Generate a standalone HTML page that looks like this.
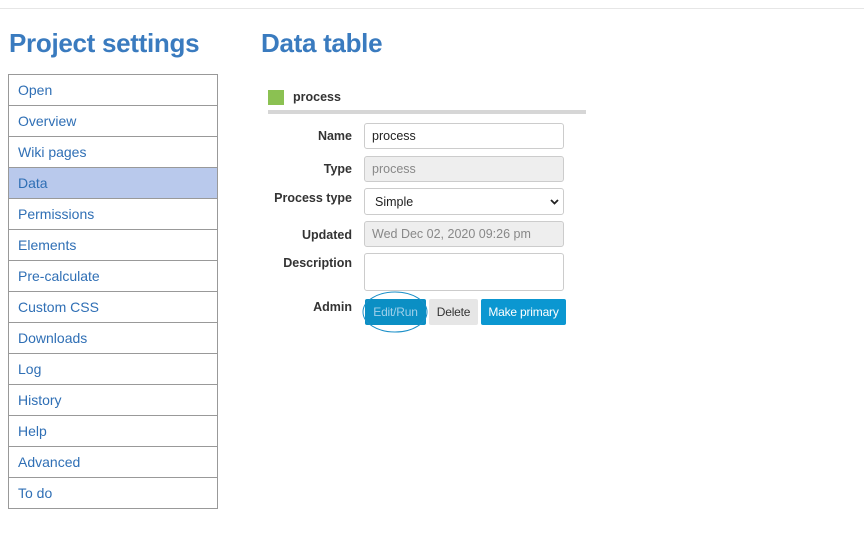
<!DOCTYPE html>
<html><head><meta charset="utf-8"><style>
*{box-sizing:border-box}
body{margin:0;width:864px;height:540px;background:#fff;font-family:"Liberation Sans",Arial,sans-serif;position:relative;overflow:hidden}
.top{position:absolute;left:0;top:0;width:864px;height:9px;border-bottom:1px solid #e6e6e6}
h1{position:absolute;margin:0;font-size:26px;font-weight:bold;color:#3a7bbf;top:28px;letter-spacing:-0.3px}
.nav{position:absolute;left:8px;top:74px;width:210px;border:1px solid #999}
.nav div{height:31px;border-top:1px solid #999;padding-left:9px;line-height:30px;font-size:14px;color:#2f6fb5}
.nav div:first-child{border-top:none;height:30px}
.nav .act{background:#b9c9ec}
.lab{position:absolute;right:512px;font-size:12.5px;font-weight:bold;color:#333;text-align:right}
.in{position:absolute;left:364px;width:200px;height:26px;border:1px solid #ccc;border-radius:3px;font-size:12.5px;padding-left:7px;line-height:24px;color:#222;background:#fff}
.in.dis{background:#eee;color:#888}
.btn{position:absolute;top:299px;height:26px;line-height:26px;font-size:12px;text-align:center;border-radius:2px;letter-spacing:-0.2px}
</style></head><body>
<div class="top"></div>
<h1 style="left:9px">Project settings</h1>
<h1 style="left:261px">Data table</h1>
<div class="nav">
<div>Open</div><div>Overview</div><div>Wiki pages</div><div class="act">Data</div><div>Permissions</div><div>Elements</div><div>Pre-calculate</div><div>Custom CSS</div><div>Downloads</div><div>Log</div><div>History</div><div>Help</div><div>Advanced</div><div>To do</div>
</div>
<div style="position:absolute;left:268px;top:90px;width:16px;height:15px;background:#8bc152"></div>
<div style="position:absolute;left:293px;top:90px;font-size:12.5px;font-weight:bold;color:#333">process</div>
<div style="position:absolute;left:268px;top:110px;width:318px;height:4px;background:#d6d6d6"></div>
<div class="lab" style="top:129px">Name</div>
<div class="in" style="top:123px">process</div>
<div class="lab" style="top:162px">Type</div>
<div class="in dis" style="top:156px">process</div>
<div class="lab" style="top:191px">Process type</div>
<div class="in" style="top:188px;height:27px;padding-left:10px;line-height:26px">Simple<svg style="position:absolute;right:4px;top:10px" width="9" height="6" viewBox="0 0 9 6"><path d="M1 1l3.5 3.5L8 1" stroke="#222" stroke-width="1.8" fill="none"/></svg></div>
<div class="lab" style="top:228px">Updated</div>
<div class="in dis" style="top:221px">Wed Dec 02, 2020 09:26 pm</div>
<div class="lab" style="top:256px">Description</div>
<div class="in" style="top:253px;height:38px"></div>
<div class="lab" style="top:300px">Admin</div>
<div class="btn" style="left:365px;width:61px;background:#0b8fc4;color:#9fd0ea">Edit/Run</div>
<div class="btn" style="left:429px;width:49px;background:#e6e6e6;color:#333">Delete</div>
<div class="btn" style="left:481px;width:85px;background:#0b97d1;color:#fff">Make primary</div>
<svg style="position:absolute;left:360px;top:290px" width="72" height="44"><ellipse cx="35" cy="22" rx="32" ry="20" fill="none" stroke="#1a8fc8" stroke-width="1"/></svg>
</body></html>
